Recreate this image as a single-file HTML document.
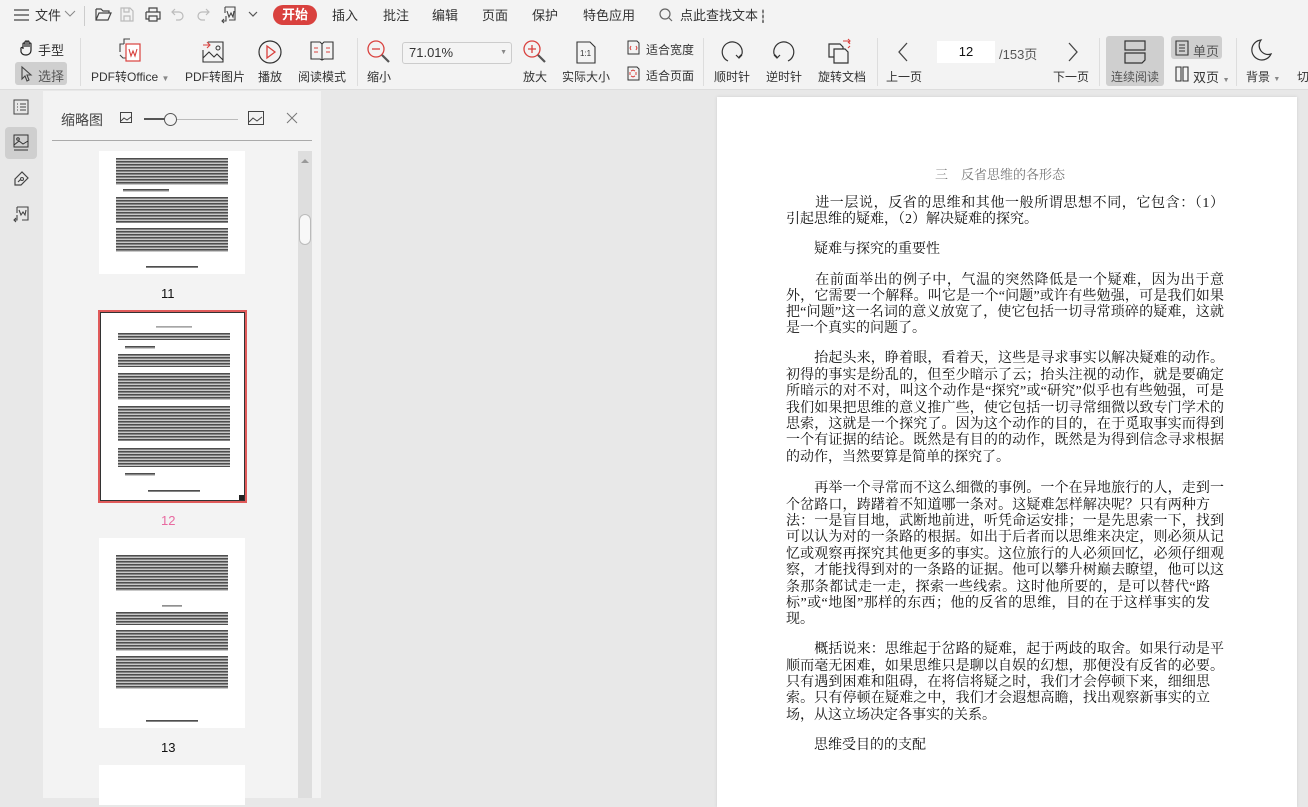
<!DOCTYPE html>
<html><head><meta charset="utf-8">
<style>
*{margin:0;padding:0;box-sizing:border-box}
body{width:1308px;height:798px;overflow:hidden;background:#e8e8e8;font-family:"Liberation Sans","Noto Sans CJK SC",sans-serif;color:#333;position:relative}
.a{position:absolute}
.t{font-size:12px;white-space:nowrap;color:#333}
.tab{font-size:13px;top:5px;color:#333}
svg{position:absolute;overflow:visible}
.vs{position:absolute;top:38px;width:1px;height:48px;background:#ddd}
.ln{position:absolute;left:786px;width:438px;font-family:"Liberation Serif","Noto Serif CJK SC",serif;font-size:14px;line-height:16px;white-space:nowrap;color:#111;text-align:justify;text-align-last:justify;height:16px;overflow:visible}
.ln.l{text-align-last:left}
.th{position:absolute;background:#fff}
.blk{position:absolute;background:repeating-linear-gradient(#222 0 1px,#666 1px 2px,#bbb 2px 3px);opacity:.8}
</style></head><body>
<div class="a" style="left:0;top:0;width:1308px;height:90px;background:#f3f3f3;border-bottom:1px solid #ddd"></div>
<svg style="left:14px;top:9px" width="16" height="12"><path d="M0 1h15M0 6h15M0 11h15" stroke="#444" stroke-width="1.3"/></svg>
<div class="a tab" style="left:35px">文件</div>
<svg style="left:65px;top:11px" width="10" height="6"><path d="M0 0l5 5 5-5" stroke="#888" fill="none"/></svg>
<div class="a" style="left:84px;top:6px;width:1px;height:20px;background:#ccc"></div>
<svg style="left:95px;top:7px" width="16" height="14"><path d="M1 2h5l2 2h6v2M1 2v11h12l3-7H4L1 13" stroke="#444" fill="none" stroke-width="1.2"/></svg>
<svg style="left:120px;top:7px" width="14" height="15"><path d="M1 1h9l3 3v10H1zM4 1v4h5V1M4 14V9h6v5" stroke="#bbb" fill="none" stroke-width="1.2"/></svg>
<svg style="left:145px;top:7px" width="16" height="15"><path d="M4 5V1h8v4M1 5h14v7h-3M4 12H1V5M4 9h8v5H4z" stroke="#444" fill="none" stroke-width="1.2"/></svg>
<svg style="left:172px;top:8px" width="12" height="12"><path d="M3 1L0 4l3 3M0 4h7a4 4 0 010 8H4" stroke="#bbb" fill="none" stroke-width="1.2"/></svg>
<svg style="left:197px;top:8px" width="12" height="12"><path d="M9 1l3 3-3 3M12 4H5a4 4 0 000 8h3" stroke="#bbb" fill="none" stroke-width="1.2"/></svg>
<svg style="left:221px;top:6px" width="16" height="17"><path d="M4 1h10v13H8M4 1v6M6 5l2 6 2-4 2 4 1-6M5 10v5H1M3 13l-2 2 2 2" stroke="#444" fill="none" stroke-width="1.1"/></svg>
<svg style="left:249px;top:12px" width="9" height="6"><path d="M0 0l4 4 4-4" stroke="#555" fill="none" stroke-width="1.2"/></svg>
<div class="a" style="left:273px;top:5px;width:44px;height:20px;border-radius:10px;background:#d9413e;color:#fff;font-size:13px;font-weight:bold;text-align:center;line-height:20px">开始</div>
<div class="a tab" style="left:332px">插入</div>
<div class="a tab" style="left:383px">批注</div>
<div class="a tab" style="left:432px">编辑</div>
<div class="a tab" style="left:482px">页面</div>
<div class="a tab" style="left:532px">保护</div>
<div class="a tab" style="left:583px">特色应用</div>
<svg style="left:659px;top:8px" width="14" height="14"><circle cx="6" cy="6" r="5" stroke="#666" fill="none" stroke-width="1.2"/><path d="M10 10l3 3" stroke="#666" stroke-width="1.2"/></svg>
<div class="a tab" style="left:680px">点此查找文本</div>
<div class="a" style="left:762px;top:9px;width:2px;height:14px;background:radial-gradient(#777 0.8px,transparent 1px) 0 0/2px 5px"></div>

<svg style="left:19px;top:40px" width="16" height="16"><path d="M4 9V4a1 1 0 012 0v3V2a1 1 0 012 0v5V2a1 1 0 012 0v5V4a1 1 0 012 0v6c0 3-2 5-5 5s-4-1-5-3L2 9a1 1 0 012-1" stroke="#222" fill="none" stroke-width="1.2"/></svg>
<div class="a t" style="left:38px;top:40px;font-size:13px">手型</div>
<div class="a" style="left:15px;top:62px;width:52px;height:23px;background:#cfcfcf;border-radius:3px"></div>
<svg style="left:21px;top:66px" width="12" height="16"><path d="M1 1v12l3-3 2 5 2-1-2-5h4z" stroke="#444" fill="none" stroke-width="1.1"/></svg>
<div class="a t" style="left:38px;top:66px;font-size:13px;color:#555">选择</div>
<div class="vs" style="left:80px"></div>
<svg style="left:117px;top:38px" width="26" height="26"><path d="M7 6V1h6M7 6H3v8M3 17l3 3h4" stroke="#444" fill="none" stroke-width="1.1"/><rect x="9" y="6" width="14" height="17" stroke="#d9413e" fill="#fff" stroke-width="1.2"/><path d="M12 11l2 7 2-5 2 5 2-7" stroke="#d9413e" fill="none" stroke-width="1.1"/></svg>
<div class="a t" style="left:91px;top:68px">PDF转Office <span style="font-size:8px;color:#888">▼</span></div>
<svg style="left:202px;top:41px" width="22" height="22"><path d="M6 1h15v20H1V9M1 17l6-6 5 5 3-3 6 6" stroke="#333" fill="none" stroke-width="1.1"/><path d="M1 4h7M5 1l3 3-3 3" stroke="#d9413e" fill="none" stroke-width="1.1"/><circle cx="16" cy="7" r="2" stroke="#333" fill="none"/></svg>
<div class="a t" style="left:185px;top:68px">PDF转图片</div>
<svg style="left:258px;top:40px" width="24" height="24"><circle cx="12" cy="12" r="11" stroke="#333" fill="none" stroke-width="1.2"/><path d="M9 6v12l8-6z" stroke="#d9413e" fill="none" stroke-width="1.3"/></svg>
<div class="a t" style="left:258px;top:68px">播放</div>
<svg style="left:310px;top:41px" width="24" height="20"><path d="M1 1h9l2 2 2-2h9v17h-9l-2 1-2-1H1zM12 3v16" stroke="#333" fill="none" stroke-width="1.1"/><path d="M4 7h4M4 11h4M16 7h4M16 11h4" stroke="#d9413e" stroke-width="1.1"/></svg>
<div class="a t" style="left:298px;top:68px">阅读模式</div>
<div class="vs" style="left:357px"></div>
<svg style="left:367px;top:40px" width="25" height="25"><circle cx="9" cy="9" r="8" stroke="#d9413e" fill="none" stroke-width="1.3"/><path d="M5 9h8" stroke="#d9413e" stroke-width="1.3"/><path d="M15 15l7 7" stroke="#555" stroke-width="2.2"/></svg>
<div class="a t" style="left:367px;top:68px">缩小</div>
<div class="a" style="left:402px;top:42px;width:110px;height:22px;border:1px solid #ccc;border-radius:3px;background:#f4f4f4;font-size:13px;line-height:20px;padding-left:6px">71.01%<span style="position:absolute;right:4px;font-size:7px;color:#888">▼</span></div>
<svg style="left:523px;top:40px" width="25" height="25"><circle cx="9" cy="9" r="8" stroke="#d9413e" fill="none" stroke-width="1.3"/><path d="M5 9h8M9 5v8" stroke="#d9413e" stroke-width="1.3"/><path d="M15 15l7 7" stroke="#555" stroke-width="2.2"/></svg>
<div class="a t" style="left:523px;top:68px">放大</div>
<svg style="left:576px;top:41px" width="20" height="23"><path d="M1 1h13l5 5v16H1z" stroke="#333" fill="none" stroke-width="1.1"/><text x="4" y="15" font-size="8" fill="#333" font-family="Liberation Sans">1:1</text></svg>
<div class="a t" style="left:562px;top:68px">实际大小</div>
<svg style="left:627px;top:40px" width="13" height="15"><path d="M1 1h9l2 2v11H1z" stroke="#333" fill="none"/><path d="M4 6l-1 2 1 2M9 6l1 2-1 2" stroke="#d9413e" fill="none"/></svg>
<div class="a t" style="left:646px;top:41px">适合宽度</div>
<svg style="left:627px;top:66px" width="13" height="15"><path d="M1 1h9l2 2v11H1z" stroke="#333" fill="none"/><path d="M4 5l2-1 2 1M4 10l2 1 2-1M3 6v3M9 6v3" stroke="#d9413e" fill="none"/></svg>
<div class="a t" style="left:646px;top:67px">适合页面</div>
<div class="vs" style="left:703px"></div>
<svg style="left:719px;top:40px" width="26" height="24"><path d="M9 21A10 10 0 1123 14l-3 3" stroke="#333" fill="none" stroke-width="1.2"/><path d="M17 15l3 3 3-3" stroke="#333" fill="none" stroke-width="1.2"/></svg>
<div class="a t" style="left:714px;top:68px">顺时针</div>
<svg style="left:771px;top:40px" width="26" height="24"><path d="M17 21A10 10 0 103 14l3 3" stroke="#333" fill="none" stroke-width="1.2"/><path d="M3 15l3 3 3-3" stroke="#333" fill="none" stroke-width="1.2"/></svg>
<div class="a t" style="left:766px;top:68px">逆时针</div>
<svg style="left:828px;top:39px" width="26" height="26"><path d="M1 5h11l3 3v10H1z" stroke="#333" fill="#f3f3f3" stroke-width="1.2"/><path d="M6 10h11l3 3v11H6z" stroke="#333" fill="#f3f3f3" stroke-width="1.2"/><path d="M15 2h5l2 3M20 0l2 2-2 2M22 7l-2 2" stroke="#d9413e" fill="none" stroke-width="1.1"/></svg>
<div class="a t" style="left:818px;top:68px">旋转文档</div>
<div class="vs" style="left:877px"></div>
<svg style="left:898px;top:42px" width="10" height="20"><path d="M9 1L1 10l8 9" stroke="#444" fill="none" stroke-width="1.3"/></svg>
<div class="a t" style="left:886px;top:68px">上一页</div>
<div class="a" style="left:937px;top:41px;width:58px;height:22px;background:#fff;font-size:13px;text-align:center;line-height:22px;color:#111">12</div>
<div class="a t" style="left:999px;top:44px;font-size:13px;color:#555">/153页</div>
<svg style="left:1068px;top:42px" width="10" height="20"><path d="M1 1l8 9-8 9" stroke="#444" fill="none" stroke-width="1.3"/></svg>
<div class="a t" style="left:1053px;top:68px">下一页</div>
<div class="vs" style="left:1099px"></div>
<div class="a" style="left:1106px;top:36px;width:58px;height:50px;background:#cfcfcf;border-radius:3px"></div>
<svg style="left:1124px;top:40px" width="22" height="24"><rect x="1" y="1" width="20" height="9" stroke="#333" fill="none" stroke-width="1.2"/><path d="M1 13h20v7l-3 3H1z" stroke="#333" fill="none" stroke-width="1.2"/></svg>
<div class="a t" style="left:1111px;top:68px;color:#555">连续阅读</div>
<div class="a" style="left:1171px;top:36px;width:51px;height:23px;background:#cfcfcf;border-radius:3px"></div>
<svg style="left:1175px;top:40px" width="14" height="16"><path d="M1 1h12v14H1zM4 5h6M4 8h6M4 11h6" stroke="#333" fill="none" stroke-width="1.1"/></svg>
<div class="a t" style="left:1193px;top:41px;font-size:13px;color:#555">单页</div>
<svg style="left:1175px;top:66px" width="14" height="16"><path d="M1 1h5v14H1zM8 1h5v14H8z" stroke="#333" fill="none" stroke-width="1.1"/></svg>
<div class="a t" style="left:1193px;top:67px;font-size:13px">双页 <span style="font-size:7px;color:#888">▼</span></div>
<div class="vs" style="left:1236px"></div>
<svg style="left:1251px;top:38px" width="22" height="24"><path d="M10 2A10 10 0 1020 16 9 9 0 0110 2z" stroke="#333" fill="none" stroke-width="1.2"/></svg>
<div class="a t" style="left:1246px;top:68px">背景 <span style="font-size:7px;color:#888">▼</span></div>
<div class="a t" style="left:1297px;top:68px">切</div>

<div class="a" style="left:0;top:91px;width:43px;height:707px;background:#e8e8e8"></div>
<svg style="left:13px;top:99px" width="16" height="16"><rect x="1" y="1" width="14" height="14" stroke="#444" fill="none"/><path d="M4 5h1M4 8h1M4 11h1M7 5h6M7 8h6M7 11h6" stroke="#444"/></svg>
<div class="a" style="left:5px;top:127px;width:32px;height:32px;background:#cfcfcf;border-radius:4px"></div>
<svg style="left:13px;top:134px" width="16" height="18"><rect x="1" y="1" width="14" height="12" stroke="#333" fill="none"/><path d="M1 11l5-4 4 3 5-3M1 16h14" stroke="#333" fill="none"/><circle cx="5" cy="5" r="1.3" stroke="#333" fill="none"/></svg>
<svg style="left:13px;top:170px" width="17" height="17"><path d="M2 9l7-7 6 6-7 7H2zM5 12l3-3M9 2l6 6" stroke="#444" fill="none" stroke-width="1.2"/><circle cx="9" cy="9" r="1.5" stroke="#444" fill="none"/></svg>
<svg style="left:12px;top:206px" width="18" height="17"><path d="M5 1h11v13h-6M5 1v6M7 4l2 5 2-3 2 3 1-5M5 9v5H2M4 12l-2 2 2 2" stroke="#444" fill="none" stroke-width="1.1"/></svg>

<div class="a" style="left:43px;top:91px;width:278px;height:707px;background:#f3f3f3"></div>
<div class="a" style="left:61px;top:110px;font-size:14px;color:#444">缩略图</div>
<svg style="left:120px;top:112px" width="12" height="12"><rect x="0.5" y="0.5" width="11" height="10" stroke="#444" fill="none"/><path d="M1 9l3-3 3 2 4-3" stroke="#444" fill="none"/></svg>
<div class="a" style="left:144px;top:119px;width:94px;height:1px;background:#bbb"></div>
<div class="a" style="left:144px;top:118px;width:24px;height:2px;background:#555"></div>
<div class="a" style="left:164px;top:113px;width:13px;height:13px;border:1.3px solid #555;border-radius:50%;background:#f3f3f3"></div>
<svg style="left:248px;top:111px" width="16" height="14"><rect x="0.5" y="0.5" width="15" height="13" stroke="#444" fill="none"/><path d="M1 11l4-4 4 3 5-4" stroke="#444" fill="none"/></svg>
<svg style="left:287px;top:113px" width="10" height="10"><path d="M0 0l10 10M10 0L0 10" stroke="#777"/></svg>
<div class="a" style="left:52px;top:140px;width:260px;height:1px;background:#aaa"></div>
<div class="a" style="left:298px;top:151px;width:14px;height:647px;background:#dedede"></div>
<div class="a" style="left:299px;top:214px;width:12px;height:31px;background:#f8f8f8;border:1px solid #bbb;border-radius:6px"></div>
<svg style="left:301px;top:158px" width="8" height="5"><path d="M0 5l4-4 4 4z" fill="#999"/></svg>

<div class="th" style="left:99px;top:151px;width:146px;height:123px">
 <div class="blk" style="left:17px;top:7px;width:112px;height:27px"></div>
 <div class="blk" style="left:24px;top:38px;width:46px;height:3px"></div>
 <div class="blk" style="left:17px;top:46px;width:112px;height:26px"></div>
 <div class="blk" style="left:17px;top:77px;width:112px;height:24px"></div>
 <div class="blk" style="left:47px;top:115px;width:52px;height:2px"></div>
</div>
<div class="a" style="left:161px;top:286px;font-size:13px;color:#111">11</div>
<div class="a" style="left:98px;top:310px;width:149px;height:193px;border:2px solid #e05a5a;background:#fff"></div>
<div class="th" style="left:100px;top:312px;width:145px;height:189px;border:1px solid #333">
 <div class="blk" style="left:55px;top:13px;width:36px;height:2px;opacity:.4"></div>
 <div class="blk" style="left:17px;top:20px;width:112px;height:7px"></div>
 <div class="blk" style="left:24px;top:33px;width:30px;height:3px"></div>
 <div class="blk" style="left:17px;top:41px;width:112px;height:13px"></div>
 <div class="blk" style="left:17px;top:60px;width:112px;height:27px"></div>
 <div class="blk" style="left:17px;top:93px;width:112px;height:35px"></div>
 <div class="blk" style="left:17px;top:135px;width:112px;height:19px"></div>
 <div class="blk" style="left:24px;top:160px;width:30px;height:3px"></div>
 <div class="blk" style="left:47px;top:177px;width:52px;height:2px"></div>
 <div class="a" style="right:0;bottom:0;width:5px;height:5px;background:#222"></div>
</div>
<div class="a" style="left:161px;top:513px;font-size:13px;color:#e86aa0">12</div>
<div class="th" style="left:99px;top:538px;width:146px;height:190px">
 <div class="blk" style="left:17px;top:17px;width:112px;height:36px"></div>
 <div class="blk" style="left:63px;top:67px;width:20px;height:2px;opacity:.5"></div>
 <div class="blk" style="left:17px;top:74px;width:112px;height:13px"></div>
 <div class="blk" style="left:17px;top:92px;width:112px;height:21px"></div>
 <div class="blk" style="left:17px;top:118px;width:112px;height:33px"></div>
 <div class="blk" style="left:47px;top:182px;width:52px;height:2px"></div>
</div>
<div class="a" style="left:161px;top:740px;font-size:13px;color:#111">13</div>
<div class="th" style="left:99px;top:765px;width:146px;height:40px"></div>

<div class="a" style="left:717px;top:97px;width:580px;height:710px;background:#fff;box-shadow:0 0 3px #ccc"></div>
<div class="a" style="left:935px;top:164px;font-family:'Liberation Serif','Noto Serif CJK SC',serif;font-size:13px;color:#777;white-space:nowrap">三　反省思维的各形态</div>
<div class="ln" style="top:196px">　　进一层说，反省的思维和其他一般所谓思想不同，它包含：（1）</div>
<div class="ln l" style="top:212px">引起思维的疑难，（2）解决疑难的探究。</div>
<div class="ln l" style="top:242px">　　疑难与探究的重要性</div>
<div class="ln" style="top:273px">　　在前面举出的例子中，气温的突然降低是一个疑难，因为出于意</div>
<div class="ln" style="top:289px">外，它需要一个解释。叫它是一个“问题”或许有些勉强，可是我们如果</div>
<div class="ln" style="top:305px">把“问题”这一名词的意义放宽了，使它包括一切寻常琐碎的疑难，这就</div>
<div class="ln l" style="top:321px">是一个真实的问题了。</div>
<div class="ln" style="top:351px">　　抬起头来，睁着眼，看着天，这些是寻求事实以解决疑难的动作。</div>
<div class="ln" style="top:368px">初得的事实是纷乱的，但至少暗示了云；抬头注视的动作，就是要确定</div>
<div class="ln" style="top:384px">所暗示的对不对，叫这个动作是“探究”或“研究”似乎也有些勉强，可是</div>
<div class="ln" style="top:401px">我们如果把思维的意义推广些，使它包括一切寻常细微以致专门学术的</div>
<div class="ln" style="top:417px">思索，这就是一个探究了。因为这个动作的目的，在于觅取事实而得到</div>
<div class="ln" style="top:433px">一个有证据的结论。既然是有目的的动作，既然是为得到信念寻求根据</div>
<div class="ln l" style="top:450px">的动作，当然要算是简单的探究了。</div>
<div class="ln" style="top:481px">　　再举一个寻常而不这么细微的事例。一个在异地旅行的人，走到一</div>
<div class="ln" style="top:498px;width:424px">个岔路口，踌躇着不知道哪一条对。这疑难怎样解决呢？只有两种方</div>
<div class="ln" style="top:514px">法：一是盲目地，武断地前进，听凭命运安排；一是先思索一下，找到</div>
<div class="ln" style="top:530px">可以认为对的一条路的根据。如出于后者而以思维来决定，则必须从记</div>
<div class="ln" style="top:547px">忆或观察再探究其他更多的事实。这位旅行的人必须回忆，必须仔细观</div>
<div class="ln" style="top:563px">察，才能找得到对的一条路的证据。他可以攀升树巅去瞭望，他可以这</div>
<div class="ln" style="top:580px;width:424px">条那条都试走一走，探索一些线索。这时他所要的，是可以替代“路</div>
<div class="ln" style="top:596px;width:424px">标”或“地图”那样的东西；他的反省的思维，目的在于这样事实的发</div>
<div class="ln l" style="top:612px">现。</div>
<div class="ln" style="top:642px">　　概括说来：思维起于岔路的疑难，起于两歧的取舍。如果行动是平</div>
<div class="ln" style="top:659px">顺而毫无困难，如果思维只是聊以自娱的幻想，那便没有反省的必要。</div>
<div class="ln" style="top:675px;width:424px">只有遇到困难和阻碍，在将信将疑之时，我们才会停顿下来，细细思</div>
<div class="ln" style="top:691px;width:424px">索。只有停顿在疑难之中，我们才会遐想高瞻，找出观察新事实的立</div>
<div class="ln l" style="top:708px">场，从这立场决定各事实的关系。</div>
<div class="ln l" style="top:738px">　　思维受目的的支配</div>
</body></html>
